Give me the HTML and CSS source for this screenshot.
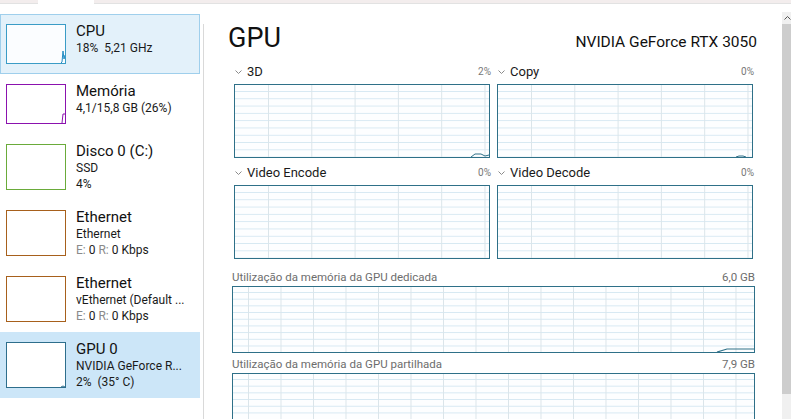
FILE: index.html
```html
<!DOCTYPE html>
<html>
<head>
    <meta charset="UTF-8">
    <title>Gestor de Tarefas - Desempenho</title>
    <link rel="stylesheet" href="styles.css">
</head>
<body>
    <div class="tabs"><span class="tab"></span></div>

    <div class="window">
        <!-- Lista de dispositivos -->
        <aside class="sidebar">
            <div class="item hover">
                <div class="thumb cpu">
                    <svg class="trace" viewBox="0 0 58 38"><polyline points="54,38 55,37 56,26 57,34 58,30" fill="none" stroke="#1f8bc3" stroke-width="1"/></svg>
                </div>
                <div class="info">
                    <div class="name">CPU</div>
                    <div class="sub">18%&nbsp; 5,21 GHz</div>
                </div>
            </div>
            <div class="item">
                <div class="thumb mem">
                    <svg class="trace" viewBox="0 0 58 38"><polyline points="55,38 56,29 58,29" fill="none" stroke="#8b12ae" stroke-width="1"/></svg>
                </div>
                <div class="info">
                    <div class="name">Memória</div>
                    <div class="sub">4,1/15,8 GB (26%)</div>
                </div>
            </div>
            <div class="item tall">
                <div class="thumb disk"></div>
                <div class="info">
                    <div class="name">Disco 0 (C:)</div>
                    <div class="sub">SSD</div>
                    <div class="sub">4%</div>
                </div>
            </div>
            <div class="item tall">
                <div class="thumb net"></div>
                <div class="info">
                    <div class="name">Ethernet</div>
                    <div class="sub">Ethernet</div>
                    <div class="sub"><span class="dim">E:</span> 0 <span class="dim">R:</span> 0 Kbps</div>
                </div>
            </div>
            <div class="item tall">
                <div class="thumb net"></div>
                <div class="info">
                    <div class="name">Ethernet</div>
                    <div class="sub">vEthernet (Default ...</div>
                    <div class="sub"><span class="dim">E:</span> 0 <span class="dim">R:</span> 0 Kbps</div>
                </div>
            </div>
            <div class="item tall selected">
                <div class="thumb gpu">
                    <svg class="trace" viewBox="0 0 58 44"><polyline points="54,44 56,43 58,44" fill="none" stroke="#2e6e8c" stroke-width="1"/></svg>
                </div>
                <div class="info">
                    <div class="name">GPU 0</div>
                    <div class="sub">NVIDIA GeForce R...</div>
                    <div class="sub">2%&nbsp; (35° C)</div>
                </div>
            </div>
        </aside>

        <div class="divider"></div>

        <!-- Painel da GPU -->
        <main class="panel">
            <div class="panel-head">
                <h1>GPU</h1>
                <div class="model">NVIDIA GeForce RTX 3050</div>
            </div>

            <div class="engines">
                <div class="engine">
                    <div class="engine-label">
                        <svg class="chev" viewBox="0 0 7 4"><polyline points="0.5,0.5 3.5,3.5 6.5,0.5" fill="none" stroke="#8a8a8a" stroke-width="1"/></svg>
                        <span class="engine-name">3D</span>
                        <span class="pct">2%</span>
                    </div>
                    <div class="chart small">
                        <svg class="trace" viewBox="0 0 254 72"><polyline points="236,72 240,69 246,69 250,71 254,70" fill="none" stroke="#2e7088" stroke-width="1"/></svg>
                    </div>
                </div>
                <div class="engine">
                    <div class="engine-label">
                        <svg class="chev" viewBox="0 0 7 4"><polyline points="0.5,0.5 3.5,3.5 6.5,0.5" fill="none" stroke="#8a8a8a" stroke-width="1"/></svg>
                        <span class="engine-name">Copy</span>
                        <span class="pct">0%</span>
                    </div>
                    <div class="chart small">
                        <svg class="trace" viewBox="0 0 254 72"><polyline points="238,72 241,71 245,71 248,72" fill="none" stroke="#2e7088" stroke-width="1"/></svg>
                    </div>
                </div>
                <div class="engine">
                    <div class="engine-label">
                        <svg class="chev" viewBox="0 0 7 4"><polyline points="0.5,0.5 3.5,3.5 6.5,0.5" fill="none" stroke="#8a8a8a" stroke-width="1"/></svg>
                        <span class="engine-name">Video Encode</span>
                        <span class="pct">0%</span>
                    </div>
                    <div class="chart small"></div>
                </div>
                <div class="engine">
                    <div class="engine-label">
                        <svg class="chev" viewBox="0 0 7 4"><polyline points="0.5,0.5 3.5,3.5 6.5,0.5" fill="none" stroke="#8a8a8a" stroke-width="1"/></svg>
                        <span class="engine-name">Video Decode</span>
                        <span class="pct">0%</span>
                    </div>
                    <div class="chart small"></div>
                </div>
            </div>

            <div class="mem-block">
                <div class="mem-label">
                    <span>Utilização da memória da GPU dedicada</span>
                    <span>6,0 GB</span>
                </div>
                <div class="chart wide">
                    <svg class="trace" viewBox="0 0 521 65"><polyline points="484,65 494,62 521,62" fill="none" stroke="#2e7088" stroke-width="1.2"/></svg>
                </div>
            </div>

            <div class="mem-block">
                <div class="mem-label">
                    <span>Utilização da memória da GPU partilhada</span>
                    <span>7,9 GB</span>
                </div>
                <div class="chart wide open"></div>
            </div>
        </main>

        <div class="scrollbar">
            <svg class="scroll-up" viewBox="0 0 7 4"><polyline points="0.5,3.5 3.5,0.5 6.5,3.5" fill="none" stroke="#555" stroke-width="1"/></svg>
            <div class="scroll-thumb"></div>
        </div>
    </div>
</body>
</html>
```

FILE: styles.css
```css
body {
    margin: 0;
    width: 791px;
    height: 419px;
    overflow: hidden;
    background-color: #fff;
    font-family: Roboto, "Noto Sans", sans-serif;
    color: #1a1a1a;
}

/* Tab strip */
.tabs {
    height: 3px;
    border-bottom: 1px solid #e2e2e2;
    background-color: #f3eded;
}

.tab {
    display: block;
    margin-left: 38px;
    width: 56px;
    height: 4px;
    background-color: #fff;
}

.window {
    display: flex;
    height: 415px;
}

/* Sidebar */
.sidebar {
    width: 200px;
    margin-right: 3px;
    padding-top: 10px;
    flex-shrink: 0;
}

.item {
    display: flex;
    gap: 10px;
    height: 60px;
    padding: 9px 5px;
    box-sizing: border-box;
    border: 1px solid transparent;
}

.item.tall {
    height: 66px;
}

.item.hover {
    background-color: #e3f1fa;
    border-color: #9fcfec;
}

.item.selected {
    background-color: #cce6f8;
    border-color: #cce6f8;
}

.thumb {
    width: 60px;
    height: 40px;
    box-sizing: border-box;
    border: 1px solid #1f8bc3;
    background-color: #fff;
    position: relative;
    flex-shrink: 0;
}

.item.tall .thumb {
    height: 46px;
}

.thumb.cpu { border-color: #3a9cc6; background-color: #fbfdff; }
.thumb.mem { border-color: #8b12ae; }
.thumb.disk { border-color: #6aab3a; }
.thumb.net { border-color: #a7601c; }
.thumb.gpu { border-color: #2e6e8c; }

.trace {
    position: absolute;
    left: 0;
    top: 0;
    width: 100%;
    height: 100%;
}

.info {
    margin-top: -2px;
    white-space: nowrap;
}

.name {
    font-size: 15px;
    line-height: 18px;
    color: #111;
}

.sub {
    font-size: 12px;
    line-height: 16px;
    color: #1a1a1a;
}

.dim {
    color: #8a8a8a;
}

.divider {
    width: 1px;
    margin-top: 20px;
    background-color: #d9d9d9;
    flex-shrink: 0;
}

/* GPU panel */
.panel {
    width: 578px;
    padding: 17px 25px 0 25px;
    box-sizing: border-box;
    flex-shrink: 0;
}

.panel-head {
    display: flex;
    justify-content: space-between;
    align-items: baseline;
}

.panel-head h1 {
    margin: 0 0 0 -1px;
    font-size: 27px;
    line-height: 34px;
    font-weight: normal;
    color: #111;
}

.model {
    font-size: 15.5px;
    color: #111;
}

.engines {
    display: grid;
    grid-template-columns: 256px 256px;
    column-gap: 7px;
    row-gap: 6px;
    margin-top: 8px;
    margin-left: 5px;
}

.engine-label {
    display: flex;
    align-items: center;
    height: 17px;
    margin-bottom: 4px;
}

.chev {
    width: 7px;
    height: 4px;
    margin: 0 5px 0 1px;
}

.engine-name {
    font-size: 13px;
    color: #1a1a1a;
}

.pct {
    margin-left: auto;
    margin-right: -1px;
    font-size: 10px;
    color: #777;
}

.chart {
    position: relative;
    box-sizing: border-box;
    border: 1px solid #2e7088;
    background-color: #fdfeff;
    background-image:
        linear-gradient(to right, #dbe5ea 1px, transparent 1px),
        linear-gradient(to bottom, #d6e8f2 1px, transparent 1px);
}

.chart.small {
    height: 74px;
    background-size: 43.3px 100%, 100% 7.3px;
    background-position: 33px 0, 0 6px;
}

.mem-block {
    margin-left: 3px;
    width: 523px;
}

.engines + .mem-block {
    margin-top: 11px;
}

.mem-block + .mem-block {
    margin-top: 4px;
}

.mem-label {
    display: flex;
    justify-content: space-between;
    font-size: 11.5px;
    line-height: 14px;
    color: #6d6d6d;
    margin-bottom: 2px;
}

.chart.wide {
    height: 67px;
    background-size: 32.5px 100%, 100% 6.7px;
    background-position: 15px 0, 0 5px;
}

.chart.wide.open {
    height: 46px;
    border-bottom: none;
}

/* Scrollbar */
.scrollbar {
    width: 9px;
    margin-top: 8px;
    background-color: #f0f0f0;
    display: flex;
    flex-direction: column;
    align-items: center;
    flex-shrink: 0;
}

.scroll-up {
    width: 7px;
    height: 4px;
    margin: 4px 0 4px 1px;
}

.scroll-thumb {
    width: 9px;
    height: 370px;
    background-color: #cdcdcd;
}
```
